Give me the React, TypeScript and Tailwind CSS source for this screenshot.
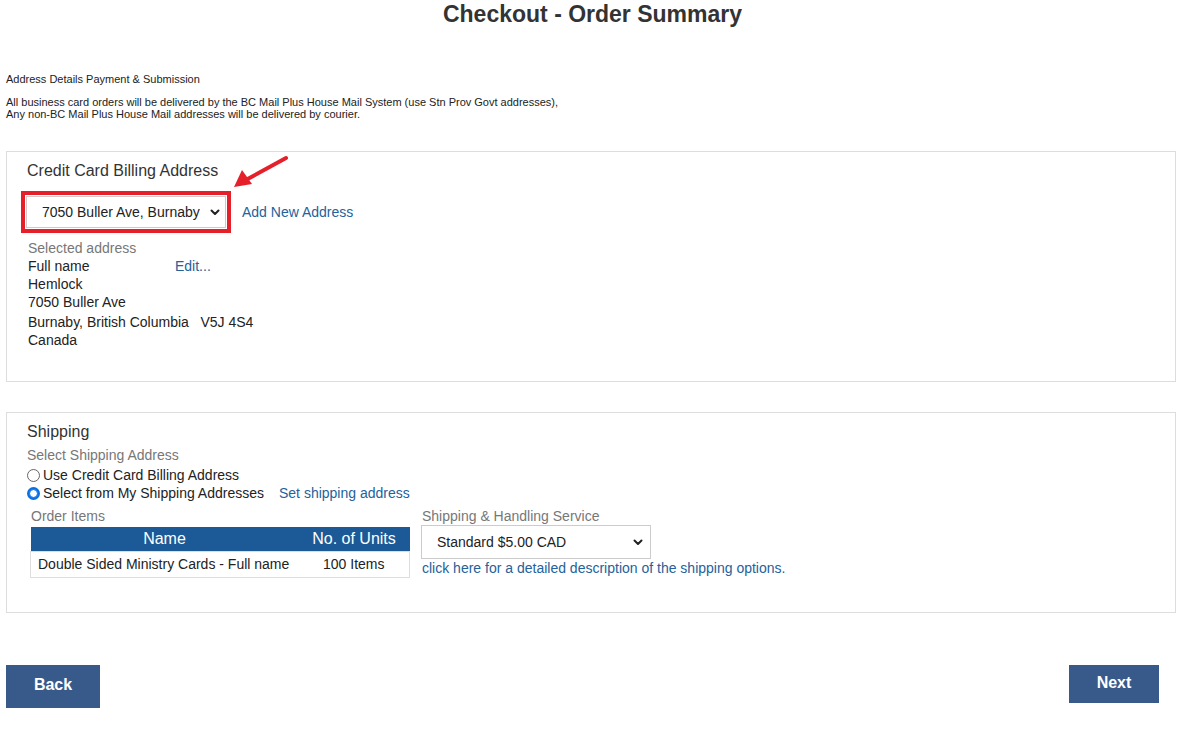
import React from "react";

const Chevron = () => (
  <svg width="12" height="12" viewBox="0 0 12 12" className="shrink-0">
    <path d="M2.5 4.5 L6 8 L9.5 4.5" fill="none" stroke="#222" strokeWidth="2" strokeLinecap="round" strokeLinejoin="round" />
  </svg>
);

export default function App() {
  return (
    <div className="w-[1184px] h-[742px] bg-white text-[#333] font-['Liberation_Sans',Arial,sans-serif] pl-[6px] pr-[8px] relative">
      <h1 className="text-center text-[23px] font-bold leading-[26px] pt-[1px] pl-[3px] text-[#333]">Checkout - Order Summary</h1>

      <div className="text-[11px] leading-[12px] mt-[46px] text-[#222]">Address Details Payment &amp; Submission</div>
      <div className="text-[11px] leading-[12px] mt-[11px] text-[#222]">
        <div>All business card orders will be delivered by the BC Mail Plus House Mail System (use Stn Prov Govt addresses),</div>
        <div>Any non-BC Mail Plus House Mail addresses will be delivered by courier.</div>
      </div>

      {/* Billing panel */}
      <div className="mt-[31px] border border-[#ddd] h-[231px] pl-[14px] pt-[8px] relative">
        <div className="text-[16px] leading-[22px] pl-[6px]">Credit Card Billing Address</div>
        <div className="flex items-center mt-[9px]">
          <div className="border-4 border-[#e5202a] p-[1px] w-[210px] h-[42px]">
            <div className="border border-[#ccc] h-full flex items-center justify-between pl-[15px] pr-[4px] text-[14px] text-[#222]">
              <span>7050 Buller Ave, Burnaby</span>
              <Chevron />
            </div>
          </div>
          <a className="ml-[11px] text-[14px] text-[#23629b]">Add New Address</a>
        </div>
        <div className="pl-[7px] mt-[6px] text-[14px] leading-[18px] text-[#222]">
          <div className="text-[#777]">Selected address</div>
          <div className="flex"><span className="w-[147px]">Full name</span><a className="text-[#23629b]">Edit...</a></div>
          <div>Hemlock</div>
          <div>7050 Buller Ave</div>
          <div className="mt-[2px]">Burnaby, British Columbia&nbsp;&nbsp;&nbsp;V5J 4S4</div>
          <div>Canada</div>
        </div>
        <svg className="absolute left-[219px] top-[2px]" width="66" height="40" viewBox="0 0 66 40">
          <line x1="60" y1="4" x2="18" y2="27" stroke="#e5202a" strokeWidth="4" strokeLinecap="round" />
          <polygon points="8,33 16,16 26,30" fill="#e5202a" />
        </svg>
      </div>

      {/* Shipping panel */}
      <div className="mt-[30px] border border-[#ddd] h-[201px] pl-[20px] pt-[9px]">
        <div className="text-[16px] leading-[20px]">Shipping</div>
        <div className="text-[14px] leading-[18px] mt-[4px] text-[#777]">Select Shipping Address</div>
        <div className="flex items-center text-[14px] leading-[18px] mt-[2px] text-[#222]">
          <span className="w-[13px] h-[13px] rounded-full border border-[#666] mr-[3px]" />
          <span>Use Credit Card Billing Address</span>
        </div>
        <div className="flex items-center text-[14px] leading-[18px] mt-0 text-[#222]">
          <span className="w-[13px] h-[13px] rounded-full bg-[#0a6fe0] flex items-center justify-center mr-[3px]">
            <span className="w-[7px] h-[7px] rounded-full bg-white border-[1.5px] border-[#0a6fe0] box-content" />
          </span>
          <span>Select from My Shipping Addresses</span>
          <a className="ml-[15px] text-[#23629b]">Set shipping address</a>
        </div>
        <div className="flex mt-[6px] pl-[3px]">
          <div className="w-[381px]">
            <div className="text-[14px] leading-[16px] text-[#777] pl-[1px]">Order Items</div>
            <table className="mt-[3px] w-[380px] border-collapse text-[14px]">
              <thead>
                <tr className="bg-[#1b5a96] text-white text-[16px] h-[24px]">
                  <th className="font-normal w-[268px]">Name</th>
                  <th className="font-normal">No. of Units</th>
                </tr>
              </thead>
              <tbody>
                <tr className="h-[26px] text-[#222]">
                  <td className="border border-[#ddd] border-r-0 pl-[7px]">Double Sided Ministry Cards - Full name</td>
                  <td className="border border-[#ddd] border-l-0 text-center">100 Items</td>
                </tr>
              </tbody>
            </table>
          </div>
          <div className="ml-[10px]">
            <div className="text-[14px] leading-[16px] text-[#777] pl-[1px]">Shipping &amp; Handling Service</div>
            <div className="mt-[1px] w-[230px] h-[34px] border border-[#ccc] flex items-center justify-between pl-[15px] pr-[6px] text-[14px] text-[#222]">
              <span>Standard $5.00 CAD</span>
              <Chevron />
            </div>
            <a className="block text-[14px] leading-[18px] mt-0 pl-[1px] text-[#23629b]">click here for a detailed description of the shipping options.</a>
          </div>
        </div>
      </div>

      <div className="flex justify-between items-start mt-[52px] pr-[17px]">
        <button className="w-[94px] h-[43px] bg-[#375a8b] text-white font-bold text-[16px] pb-[3px]">Back</button>
        <button className="w-[90px] h-[38px] bg-[#375a8b] text-white font-bold text-[16px] pb-[2px]">Next</button>
      </div>
    </div>
  );
}
